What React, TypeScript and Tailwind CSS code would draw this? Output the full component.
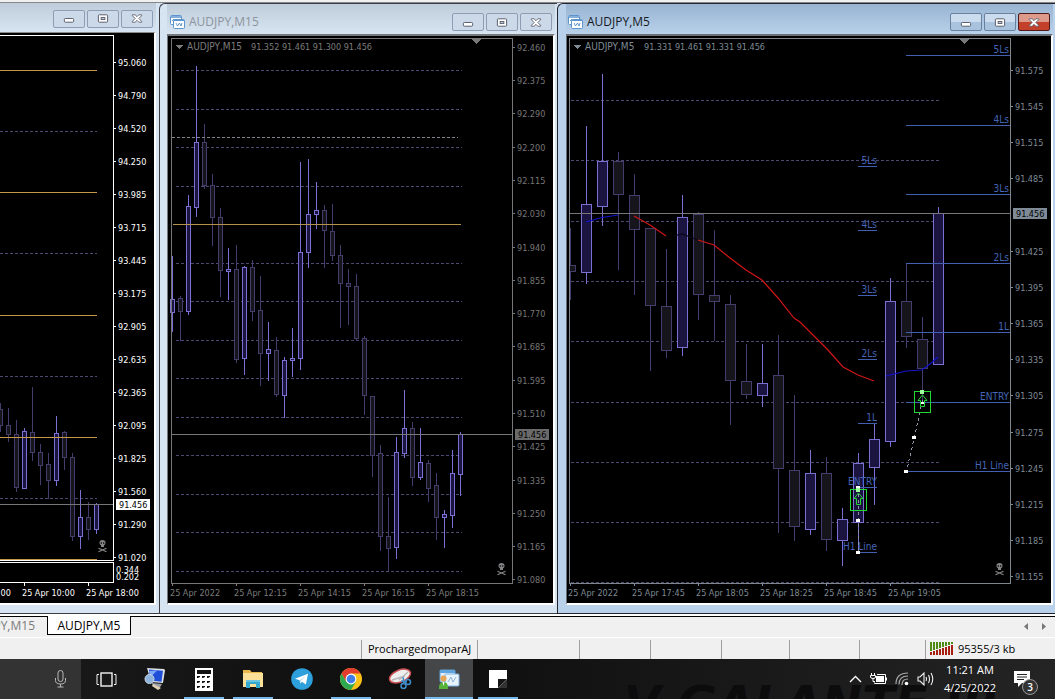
import type { ReactNode } from 'react'

// high, body top, body bottom, low, rising
type Candle = [number, number, number, number, boolean]
type Label = [number, string]

interface ChartProps {
  view: string
  candles: Candle[]
  firstX: number
  step: number
  half: number
  grid: number[]
  gridX: [number, number]
  children?: ReactNode
}

const U = true
const D = false

const H1_CANDLES: Candle[] = [
  [403, 409, 425, 431, D], [408, 425, 434, 441, D], [420, 434, 487, 491, D], [428, 431, 488, 488, U],
  [387, 432, 452, 460, D], [444, 452, 465, 484, D], [453, 464, 480, 498, D], [416, 433, 480, 485, U],
  [431, 432, 457, 469, D], [453, 457, 536, 540, D], [490, 517, 536, 548, U], [502, 517, 529, 539, D],
  [503, 504, 529, 533, U],
]

const M15_CANDLES: Candle[] = [
  [256, 299, 312, 331, U], [296, 298, 311, 340, D], [195, 206, 311, 314, U], [66, 142, 207, 216, U],
  [124, 142, 185, 188, D], [174, 185, 217, 245, D], [208, 217, 270, 296, D], [248, 269, 271, 299, U],
  [245, 269, 359, 362, D], [266, 267, 358, 374, U], [260, 267, 311, 320, D], [276, 310, 353, 385, D],
  [322, 349, 353, 380, U], [337, 350, 394, 396, D], [357, 360, 395, 417, U], [328, 358, 360, 376, U],
  [162, 252, 358, 369, U], [159, 214, 252, 267, U], [182, 210, 214, 228, U], [205, 210, 230, 267, D],
  [204, 231, 255, 260, D], [245, 255, 283, 327, D], [269, 283, 286, 324, D], [274, 286, 338, 340, D],
  [336, 338, 395, 414, D], [396, 396, 455, 476, D], [445, 453, 536, 550, D], [497, 536, 548, 570, D],
  [437, 452, 547, 558, U], [390, 428, 453, 457, U], [422, 428, 477, 485, D], [428, 462, 477, 479, U],
  [460, 463, 488, 501, D], [473, 485, 517, 539, D], [510, 514, 517, 547, U], [450, 473, 515, 527, U],
  [432, 434, 474, 495, U],
]

const M5_CANDLES: Candle[] = [
  [228, 265, 271, 299, D], [126, 204, 272, 283, U], [74, 161, 206, 225, U], [152, 161, 194, 269, D],
  [174, 195, 229, 294, D], [228, 228, 305, 370, D], [249, 306, 350, 357, D], [195, 217, 347, 355, U],
  [212, 214, 294, 319, D], [230, 295, 301, 340, D], [295, 304, 380, 424, D], [344, 381, 394, 398, D],
  [344, 383, 395, 406, U], [335, 375, 468, 532, D], [395, 470, 526, 540, D], [450, 473, 529, 534, U],
  [457, 473, 539, 550, D], [508, 519, 540, 565, U], [453, 463, 522, 553, U], [424, 439, 467, 504, U],
  [278, 301, 441, 446, U], [263, 301, 336, 347, D], [317, 339, 368, 401, D], [207, 213, 364, 364, U],
]

const H1_PRICES: Label[] = [
  [62, '95.060'], [95, '94.790'], [128, '94.520'], [161, '94.250'], [194, '93.985'], [227, '93.715'],
  [260, '93.445'], [293, '93.175'], [326, '92.905'], [359, '92.635'], [392, '92.365'], [425, '92.095'],
  [458, '91.825'], [491, '91.560'], [524, '91.290'], [557, '91.020'],
]

const M15_PRICES: Label[] = [
  [47, '92.460'], [80, '92.375'], [113, '92.290'], [147, '92.200'], [180, '92.115'], [213, '92.030'],
  [247, '91.940'], [280, '91.855'], [313, '91.770'], [346, '91.685'], [380, '91.595'], [413, '91.510'],
  [446, '91.425'], [480, '91.335'], [513, '91.250'], [546, '91.165'], [579, '91.080'],
]

const M5_PRICES: Label[] = [
  [70, '91.575'], [106, '91.545'], [142, '91.515'], [178, '91.485'], [251, '91.425'], [287, '91.395'],
  [323, '91.365'], [359, '91.335'], [395, '91.305'], [432, '91.275'], [468, '91.245'], [504, '91.215'],
  [540, '91.185'], [576, '91.155'],
]

const ENTRY_LEVELS: Label[] = [
  [166, '5Ls'], [230, '4Ls'], [295, '3Ls'], [359, '2Ls'], [423, '1L'], [487, 'ENTRY'], [552, 'H1 Line'],
]

const CURRENT_LEVELS: Label[] = [
  [55, '5Ls'], [125, '4Ls'], [194, '3Ls'], [263, '2Ls'], [332, '1L'], [402, 'ENTRY'], [471, 'H1 Line'],
]

function Chart({ view, candles, firstX, step, half, grid, gridX, children }: ChartProps) {
  return (
    <svg
      viewBox={view}
      className="block w-full min-h-0 flex-1 bg-black font-['DejaVu_Sans_Condensed','DejaVu_Sans',sans-serif] text-[9px]"
      shapeRendering="crispEdges"
    >
      {grid.map(y => (
        <line key={y} x1={gridX[0]} x2={gridX[1]} y1={y + 0.5} y2={y + 0.5} stroke="#4b4872" strokeDasharray="3 2" />
      ))}
      {candles.map(([high, top, bottom, low, up], i) => {
        const x = firstX + i * step + 0.5
        const stroke = up ? '#7a70d2' : '#443d6c'
        return (
          <g key={i} stroke={stroke}>
            <line x1={x} x2={x} y1={high} y2={low + 1} />
            <rect x={x - half} y={top + 0.5} width={half * 2} height={bottom - top} fill={up ? '#1b1440' : '#17151c'} />
          </g>
        )
      })}
      {children}
    </svg>
  )
}

function PriceAxis({ x, labels, color }: { x: number; labels: Label[]; color: string }) {
  return (
    <g fill={color} stroke="none">
      {labels.map(([y, text]) => (
        <g key={text}>
          <rect x={x + 1} y={y} width="2" height="1" />
          <text x={x + 5} y={y + 4}>{text}</text>
        </g>
      ))}
    </g>
  )
}

function TimeAxis({ x, step, labels, color }: { x: number; step: number; labels: string[]; color: string }) {
  return (
    <g fill={color}>
      {labels.map((text, i) => (
        <g key={text}>
          <rect x={x + i * step} y="583" width="1" height="3" />
          <text x={x + i * step - 2} y="596">{text}</text>
        </g>
      ))}
    </g>
  )
}

function Quote({ x, symbol, values, valuesX, color }: { x: number; symbol: string; values: string; valuesX: number; color: string }) {
  return (
    <g fill={color}>
      <path d={`M${x - 12} 45h8l-4 4z`} />
      <text x={x} y="50" className="text-[10px]">{symbol}</text>
      <text x={valuesX} y="50">{values}</text>
    </g>
  )
}

function PriceTag({ x, y, bg, color }: { x: number; y: number; bg: string; color: string }) {
  return (
    <g>
      <rect x={x} y={y} width="34" height="11" fill={bg} />
      <text x={x + 3} y={y + 9} fill={color}>91.456</text>
    </g>
  )
}

function Skull({ x, y }: { x: number; y: number }) {
  return (
    <g transform={`translate(${x} ${y})`} fill="#858588" shapeRendering="auto">
      <ellipse cx="4.500" cy="2.800" rx="3" ry="2.800" />
      <rect x="3" y="4" width="3" height="3" />
      <rect x="2.700" y="2.300" width="1.200" height="1.400" fill="#000" />
      <rect x="5.100" y="2.300" width="1.200" height="1.400" fill="#000" />
      <path d="M0.500 8.300L8.500 11.700M8.500 8.300L0.500 11.700" stroke="#858588" fill="none" strokeWidth="1.200" />
    </g>
  )
}

function Dot({ x, y }: { x: number; y: number }) {
  return <rect x={x - 2} y={y - 1} width="4" height="3" fill="#fff" />
}

function Signal({ x, y }: { x: number; y: number }) {
  return (
    <g fill="none" stroke="#22d833">
      <rect x={x - 7.5} y={y + 0.5} width="16" height="21" />
      <path d={`M${x + 0.5} ${y + 4}l4.5 5.5h-2.5v6h-4v-6h-2.5z`} shapeRendering="auto" />
      <rect x={x - 2} y={y - 1} width="4" height="4" fill="#9cff9c" stroke="none" />
    </g>
  )
}

function ChartIcon() {
  return (
    <svg width="15" height="15" viewBox="0 0 15 15" className="shrink-0" fill="#fff" stroke="#5b94cf">
      <rect x="0.5" y="0.5" width="11" height="9" rx="1" />
      <path d="M1 2h10" strokeWidth="1.500" />
      <path d="M2 6l2-2 1 2 2-2" fill="none" />
      <rect x="3.500" y="4.500" width="11" height="9" rx="1" />
      <path d="M4 5.500h10" />
      <path d="M6 8l1.500 3 2-3 1.500 3 1-3" fill="none" stroke="#3d7fc4" strokeWidth="0.800" />
    </svg>
  )
}

function CaptionButton({ kind, tone }: { kind: 'Minimize' | 'Restore' | 'Close'; tone: 'pale' | 'blue' | 'red' }) {
  const tones = {
    pale: 'border-[#8e9db5] bg-[#ccd9e8]',
    blue: 'border-[#69809f] bg-linear-to-b from-[#cbdcee] from-50% to-[#a9c3df] to-50%',
    red: 'border-[#4f1a18] bg-linear-to-b from-[#dd9a8b] from-50% to-[#c3402b] to-50%',
  }
  return (
    <button aria-label={kind} className={`flex h-[18px] w-8 items-center justify-center rounded-xs border ${tones[tone]}`}>
      <svg width="12" height="11" viewBox="0 0 13 11" fill="#fff" stroke="#535666">
        {kind === 'Minimize' && <rect x="1.500" y="5.500" width="10" height="4" rx="1" />}
        {kind === 'Restore' && (
          <>
            <rect x="1.500" y="1.500" width="10" height="8" rx="1" />
            <rect x="4.500" y="4.500" width="4" height="2" fill="#ccd9e8" />
          </>
        )}
        {kind === 'Close' && (
          <path d="M1.500 1.500h3l2 2 2-2h3v1l-3 3 3 3v1h-3l-2-2-2 2h-3v-1l3-3-3-3z" strokeWidth="0.900" />
        )}
      </svg>
    </button>
  )
}

function CaptionButtons({ active = false }: { active?: boolean }) {
  return (
    <div className="ml-auto flex gap-0.5 pr-[3px]">
      <CaptionButton kind="Minimize" tone={active ? 'blue' : 'pale'} />
      <CaptionButton kind="Restore" tone={active ? 'blue' : 'pale'} />
      <CaptionButton kind="Close" tone={active ? 'red' : 'pale'} />
    </div>
  )
}

function H1Window() {
  return (
    <section className="flex min-h-0 min-w-0 flex-col border-b border-[#3c3c44] bg-[#d7e4f2] pr-[3px] pb-2">
      <header className="flex h-[29px] shrink-0 items-center bg-linear-to-b from-[#bfcddb] to-[#d7e4f2] pt-0.5">
        <CaptionButtons />
      </header>
      <div className="flex min-h-0 flex-1 flex-col border-t border-r-2 border-b-2 border-white border-t-[#8a8a8a]">
        <Chart view="0 33 154 570" candles={H1_CANDLES} firstX={0} step={8} half={2} grid={[131, 253, 376, 498]} gridX={[0, 97]}>
          {[70, 192, 315, 437, 559].map(y => (
            <line key={y} x1="0" x2="97" y1={y + 0.5} y2={y + 0.5} stroke="#c49a48" />
          ))}
          <line x1="0" x2="113" y1="504.500" y2="504.500" stroke="#777" />
          <path d="M0 35.500H113.500V560.500H0M0 562.500H113.500V582.500H0" fill="none" stroke="#fff" />
          <PriceAxis x={113} labels={H1_PRICES} color="#fff" />
          <text x="116" y="573" fill="#fff">0.344</text>
          <text x="116" y="580" fill="#fff">0.202</text>
          <PriceTag x={116} y={499} bg="#fff" color="#000" />
          <TimeAxis x={-40} step={64} labels={['25 Apr 02:00', '25 Apr 10:00', '25 Apr 18:00']} color="#fff" />
          <Skull x={98} y={540} />
        </Chart>
      </div>
    </section>
  )
}

function M15Window() {
  return (
    <section className="flex min-h-0 min-w-0 flex-col rounded-tl-md border-t border-b border-l border-[#3c3c44] bg-[#d7e4f2] pr-0.5 pb-2 pl-[7px]">
      <header className="flex h-[30px] shrink-0 items-center gap-1 bg-linear-to-b from-[#bfcddb] to-[#d7e4f2] pt-1.5 pl-[3px]">
        <ChartIcon />
        <h2 className="text-xs text-[#8d949c]">AUDJPY,M15</h2>
        <CaptionButtons />
      </header>
      <div className="flex min-h-0 flex-1 flex-col border-t-2 border-r-2 border-b-2 border-l border-white border-t-[#77787c] border-l-[#77787c]">
        <Chart
          view="168 36 385 567"
          candles={M15_CANDLES}
          firstX={172}
          step={8}
          half={2}
          grid={[70, 109, 147, 186, 263, 301, 340, 378, 417, 455, 494, 532, 571]}
          gridX={[176, 462]}
        >
          <line x1="172" x2="458" y1="137.500" y2="137.500" stroke="#84848c" strokeDasharray="3 2" />
          <line x1="173" x2="461" y1="224.500" y2="224.500" stroke="#b3924a" />
          <line x1="171" x2="512" y1="434.500" y2="434.500" stroke="#777" />
          <rect x="171.500" y="38.500" width="341" height="545" fill="none" stroke="#777" />
          <path d="M471 39h11l-5.500 5z" fill="#777" />
          <Quote x={187} symbol="AUDJPY,M15" valuesX={251} values="91.352 91.461 91.300 91.456" color="#7c7c7c" />
          <PriceAxis x={512} labels={M15_PRICES} color="#777" />
          <PriceTag x={515} y={429} bg="#6a6a6a" color="#000" />
          <TimeAxis
            x={172}
            step={64}
            labels={['25 Apr 2022', '25 Apr 12:15', '25 Apr 14:15', '25 Apr 16:15', '25 Apr 18:15']}
            color="#7c7c7c"
          />
          <Skull x={497} y={563} />
        </Chart>
      </div>
    </section>
  )
}

function M5Window() {
  return (
    <section className="flex min-h-0 min-w-0 flex-col rounded-tl-md border-t border-b border-l border-[#22252c] bg-[#b9d1ea] pr-0.5 pb-2 pl-2">
      <header className="flex h-[30px] shrink-0 items-center gap-1 bg-linear-to-b from-[#98b4d2] to-[#b9d1ea] pt-1.5 pl-0.5">
        <ChartIcon />
        <h2 className="text-xs text-[#16191e]">AUDJPY,M5</h2>
        <CaptionButtons active />
      </header>
      <div className="flex min-h-0 flex-1 flex-col border-t-2 border-r-2 border-b-2 border-l border-white border-t-[#6b7076] border-l-[#6b7076]">
        <Chart
          view="567 36 484 567"
          candles={M5_CANDLES}
          firstX={570}
          step={16}
          half={5}
          grid={[100, 160, 221, 281, 341, 402, 462, 522, 582]}
          gridX={[571, 940]}
        >
          <rect x="564" y="260" width="5" height="16" fill="#000" />
          <line x1="570" x2="1010" y1="213.500" y2="213.500" stroke="#777" />
          <g fill="none" shapeRendering="auto" strokeWidth="1.200">
            <path d="M586 222L602 217.500 618 215" stroke="#1212cf" />
            <path d="M634 216L650 225 666 236" stroke="#d01616" />
            <path d="M674 236L682 234 698 240" stroke="#08081c" />
            <path d="M698 240L714 245 730 258 746 270 762 280 778 298 794 318 800 322 812 334 828 350 843 367 858 375 874 381" stroke="#d01616" />
            <path d="M886 376L898 373 906 371 922 370 930 364 938 357" stroke="#1212cf" />
          </g>
          <g stroke="#4360b0">
            {ENTRY_LEVELS.map(([y]) => <line key={y} x1="858" x2="877" y1={y + 0.5} y2={y + 0.5} />)}
            {CURRENT_LEVELS.map(([y]) => <line key={y} x1="906" x2="1010" y1={y + 0.5} y2={y + 0.5} />)}
          </g>
          <g fill="#4565b8" textAnchor="end" className="text-[10px]">
            {ENTRY_LEVELS.map(([y, text]) => <text key={y} x="877" y={y - 2}>{text}</text>)}
            {CURRENT_LEVELS.map(([y, text]) => <text key={y} x="1009" y={y - 2}>{text}</text>)}
          </g>
          <path d="M858.500 488V552M922.500 400L914.500 437 906.500 471" fill="none" stroke="#8f93a8" strokeDasharray="3 3" />
          <Dot x={858} y={487} />
          <Signal x={858} y={489} />
          <Signal x={922} y={391} />
          <Dot x={858} y={520} />
          <Dot x={858} y={552} />
          <rect x="921" y="402" width="3" height="2" fill="#fff" />
          <Dot x={914} y={437} />
          <Dot x={906} y={471} />
          <rect x="569.500" y="38.500" width="441" height="545" fill="none" stroke="#7f868c" />
          <path d="M959 39h11l-5.500 5z" fill="#777" />
          <Quote x={585} symbol="AUDJPY,M5" valuesX={644} values="91.331 91.461 91.331 91.456" color="#7f8b95" />
          <PriceAxis x={1010} labels={M5_PRICES} color="#7f8b95" />
          <PriceTag x={1013} y={208} bg="#7e8b97" color="#000" />
          <TimeAxis
            x={570}
            step={64}
            labels={['25 Apr 2022', '25 Apr 17:45', '25 Apr 18:05', '25 Apr 18:25', '25 Apr 18:45', '25 Apr 19:05']}
            color="#7f8b95"
          />
          <Skull x={995} y={563} />
        </Chart>
      </div>
    </section>
  )
}

function TabStrip() {
  return (
    <nav className="flex h-[21px] shrink-0 border-t border-black bg-[#f0f0f0] text-xs">
      <button className="flex w-[47px] justify-end overflow-hidden pr-3 leading-[18px] whitespace-nowrap text-[#7b7b7b]">AUDJPY,M15</button>
      <button className="-mt-px h-[19px] w-[84px] border border-t-0 border-black bg-white text-center leading-[19px] text-black">AUDJPY,M5</button>
      <div className="ml-auto flex items-center gap-3 pr-2 pb-0.5">
        <button aria-label="Scroll tabs left">
          <svg width="6" height="7" viewBox="0 0 6 7" fill="#777"><path d="M5 0v7L1 3.500z" /></svg>
        </button>
        <button aria-label="Scroll tabs right">
          <svg width="6" height="7" viewBox="0 0 6 7" fill="#777"><path d="M1 0v7l4-3.500z" /></svg>
        </button>
      </div>
    </nav>
  )
}

function StatusBar() {
  return (
    <footer className="flex h-[22px] shrink-0 items-end border-t border-white bg-[#f0f0f0] text-[11px] text-black">
      <div className="h-[19px] flex-1" />
      <div className="h-[19px] w-[116px] border-l border-[#a0a0a0] pl-1.5 leading-[17px] whitespace-nowrap">ProchargedmoparAJ</div>
      <div className="h-[19px] w-[102px] border-l border-[#a0a0a0]" />
      <div className="h-[19px] w-[71px] border-l border-[#a0a0a0]" />
      <div className="h-[19px] w-[71px] border-l border-[#a0a0a0]" />
      <div className="h-[19px] w-[68px] border-l border-[#a0a0a0]" />
      <div className="h-[19px] w-[70px] border-l border-[#a0a0a0]" />
      <div className="h-[19px] w-[66px] border-l border-[#a0a0a0]" />
      <div className="flex h-[19px] w-[130px] gap-1 border-l border-[#a0a0a0] pl-1 leading-[17px]">
        <svg width="24" height="14" viewBox="0 0 24 14" className="mt-0.5">
          {[0, 1, 2, 3, 4, 5, 6, 7].map(i => (
            <g key={i}>
              <rect x={i * 3} y="0" width="2" height={9 - i} fill="#4f8a14" />
              <rect x={i * 3} y={10 - i} width="2" height={3 + i} fill="#a81f12" />
            </g>
          ))}
        </svg>
        95355/3 kb
      </div>
    </footer>
  )
}

interface TaskProps {
  label: string
  open?: boolean
  focused?: boolean
  children: ReactNode
}

function Task({ label, open, focused, children }: TaskProps) {
  return (
    <button
      aria-label={label}
      className={`relative flex h-10 w-12 items-center justify-center ${focused ? 'bg-[#454647]' : ''}`}
    >
      {children}
      {open && <span className={`absolute bottom-0 h-0.5 bg-[#76b9ed] ${focused ? 'w-12' : 'w-10'}`} />}
    </button>
  )
}

function Taskbar() {
  return (
    <div className="relative flex h-10 shrink-0 overflow-hidden bg-linear-to-r from-[#1b1b1c] via-[#0e0e0f] via-40% to-[#242425] text-white">
      <div aria-hidden className="absolute top-5 right-14 font-['DejaVu_Sans',sans-serif] text-5xl leading-[48px] font-bold whitespace-nowrap text-[#0c0c0d] italic">
        V GALANTE JR
      </div>
      <div className="flex w-[81px] items-center justify-end bg-[#333334] pr-3.5">
        <button aria-label="Voice search">
          <svg width="13" height="18" viewBox="0 0 13 18" fill="none" stroke="#b8b8b8">
            <rect x="4" y="0.500" width="5" height="11" rx="2.500" />
            <path d="M1.500 8v2.500q0 3.500 5 3.500t5-3.500V8M6.500 14v3M3.500 17h6" />
          </svg>
        </button>
      </div>
      <div className="relative ml-px flex gap-px">
        <Task label="Task view">
          <svg width="21" height="15" viewBox="0 0 21 15" fill="none" stroke="#f2f2f2">
            <rect x="5" y="1" width="11" height="13" strokeWidth="1.400" />
            <path d="M3 2.500H1V12.500H3M18 2.500h2V12.500h-2" />
          </svg>
        </Task>
        <Task label="Computer">
          <svg width="24" height="24" viewBox="0 0 24 24">
            <path d="M4 1l17 1 1 1-2 13-12-1z" fill="#dfe2e6" />
            <path d="M6 2.500l14 1.200-1.500 11L7 13.500z" fill="#1f4fd6" />
            <path d="M6.200 4l8-.800L7 11z" fill="#7fa7f5" />
            <circle cx="6.500" cy="12" r="4.500" fill="#8eb4dc" stroke="#c9d6e4" />
            <path d="M9 16l10 1-3 5-6-3z" fill="#9aa0a6" />
            <path d="M10 17l8 4-3 2-6-4z" fill="#e0d2b4" />
          </svg>
        </Task>
        <Task label="Calculator" open>
          <svg width="18" height="23" viewBox="0 0 18 23">
            <rect width="18" height="23" fill="#fff" />
            <rect x="2" y="2" width="14" height="4" fill="#111" />
            {[9, 14, 19].map(y => [3, 8, 13].map(x => <path key={`${x}-${y}`} d={`M${x - 1} ${y - 1}h3v1l-2 1h-1z`} fill="#111" />))}
          </svg>
        </Task>
        <Task label="File Explorer" open>
          <svg width="22" height="20" viewBox="0 0 22 20">
            <path d="M1 1h7l1.500 2H20v4H1z" fill="#e9b74a" />
            <path d="M1 4h20v14H1z" fill="#fbe197" />
            <path d="M4 19v-8h14v8h-4v-4H8v4z" fill="#35a8d0" />
            <path d="M4 11h14v2H4z" fill="#6bc4e0" />
          </svg>
        </Task>
        <Task label="Telegram">
          <svg width="22" height="22" viewBox="0 0 22 22">
            <circle cx="11" cy="11" r="10.800" fill="#2da0dc" />
            <path d="M4 10.800L17 5.700 14.900 16.500 11 13.700 9.200 15.500 8.700 12.300z" fill="#fff" />
            <path d="M8.700 12.300L14.500 8 10 12.900l-.800 2.600z" fill="#b9dcf0" />
          </svg>
        </Task>
        <Task label="Google Chrome" open>
          <svg width="22" height="22" viewBox="0 0 22 22">
            <circle cx="11" cy="11" r="11" fill="#fbc116" />
            <path d="M1.500 5.500A11 11 0 0 1 20.500 5.500H11L6.200 13.800z" fill="#e33b2e" />
            <path d="M1.500 5.500A11 11 0 0 0 11 22l4.800-8.300L11 16 6.200 13.800z" fill="#2da94f" />
            <circle cx="11" cy="11" r="5.400" fill="#fff" />
            <circle cx="11" cy="11" r="4.300" fill="#3f7de8" />
          </svg>
        </Task>
        <Task label="Snipping Tool">
          <svg width="25" height="22" viewBox="0 0 25 22" fill="none">
            <ellipse cx="12" cy="8" rx="11" ry="6" transform="rotate(-22 12 8)" fill="#eee" stroke="#c94f52" strokeWidth="1.500" />
            <path d="M4 12l13-4M11 12L20 4" stroke="#b9b9be" strokeWidth="1.500" />
            <path d="M15 9l1 7M13 13l6 1" stroke="#3f8dc9" strokeWidth="1.500" />
            <circle cx="15.500" cy="18" r="2.500" stroke="#3f8dc9" strokeWidth="1.500" />
            <circle cx="20" cy="14" r="2.500" stroke="#3f8dc9" strokeWidth="1.500" />
          </svg>
        </Task>
        <Task label="MetaTrader" open focused>
          <svg width="22" height="21" viewBox="0 0 22 21">
            <rect x="2" y="1" width="15" height="12" rx="1" fill="#dcedfb" stroke="#5fa3dd" />
            <path d="M2 2.500h15" stroke="#5fa3dd" strokeWidth="3" />
            <rect x="7" y="5" width="14" height="12" rx="1" fill="#e7f3fd" stroke="#7db5e6" />
            <path d="M10 13l3-5 2 5 3-5" stroke="#8fb4d8" fill="none" />
            <circle cx="5.500" cy="9.500" r="3" fill="#e6a455" />
            <path d="M1 20q-.500-7 4.500-7t4.500 7z" fill="#56b33a" />
            <path d="M4.500 13l1 4 1-4z" fill="#fff" />
          </svg>
        </Task>
        <Task label="Sticky Notes" open>
          <svg width="18" height="18" viewBox="0 0 18 18">
            <path d="M0 0h18v18H0z" fill="#fff" />
            <path d="M9 18V9h9z" fill="#161616" />
            <path d="M9 18h9V9z" fill="#333" />
          </svg>
        </Task>
      </div>
      <div className="relative ml-auto flex items-center gap-2 pr-[17px]">
        <button aria-label="Show hidden icons">
          <svg width="13" height="8" viewBox="0 0 13 8" fill="none" stroke="#fff" strokeWidth="1.300"><path d="M1 7l5.500-5.500L12 7" /></svg>
        </button>
        <svg width="17" height="12" viewBox="0 0 17 12" fill="none" stroke="#fff">
          <path d="M1.500 0v2M4.500 0v2M0.500 2.500h5v1.500q0 1.500-2.500 1.500t-2.500-1.500zM3 5.500v3h2" />
          <rect x="6" y="3" width="8" height="6" fill="#fff" stroke="none" />
          <path d="M7 1.500h8.500v9H4.500v-1M16.500 4.500v3" />
        </svg>
        <svg width="14" height="14" viewBox="0 0 14 14" fill="none" stroke="#aaa" strokeWidth="1.200">
          <path d="M1 12Q1 1 13 1M4 12.500Q4 4 13 4M7 13Q7 7 13 7" />
          <circle cx="11.500" cy="11.500" r="1.800" fill="#fff" stroke="none" />
        </svg>
        <svg width="17" height="14" viewBox="0 0 17 14" fill="none" stroke="#eee" strokeWidth="1.100">
          <path d="M1 5h2l4-4v12L3 9H1z" />
          <path d="M9 5q1 2 0 4M11.500 3q2 4 0 8M14 1q3.500 6 0 12" />
        </svg>
        <div className="w-[56px] text-center font-['Open_Sans','Noto_Sans',sans-serif] text-[11px] leading-[18px] whitespace-nowrap">
          <p>11:21 AM</p>
          <p>4/25/2022</p>
        </div>
        <button aria-label="Notifications" className="relative ml-2 h-7 w-6">
          <svg width="17" height="17" viewBox="0 0 17 17">
            <path d="M0 0h16v12H8l-4 4v-4H0z" fill="#fff" />
            <path d="M3 3.500h10M3 6h10M3 8.500h7" stroke="#222" />
          </svg>
          <span className="absolute right-0 -bottom-0.5 h-4 w-4 rounded-full border border-[#999] bg-[#333] text-center font-['Open_Sans',sans-serif] text-[10px] leading-[14px] font-semibold">
            3
          </span>
        </button>
      </div>
    </div>
  )
}

export default function App() {
  return (
    <div className="flex h-screen min-h-[600px] flex-col overflow-hidden bg-white font-['Open_Sans','Noto_Sans',sans-serif]">
      <div className="h-[3px] shrink-0 border-b border-[#85888b] bg-[#f0f0f0]" />
      <main className="mb-0.5 grid min-h-0 flex-1 grid-cols-[159fr_398fr_498fr] grid-rows-[minmax(0,1fr)] bg-[#d7e4f2]">
        <H1Window />
        <M15Window />
        <M5Window />
      </main>
      <TabStrip />
      <StatusBar />
      <Taskbar />
    </div>
  )
}
